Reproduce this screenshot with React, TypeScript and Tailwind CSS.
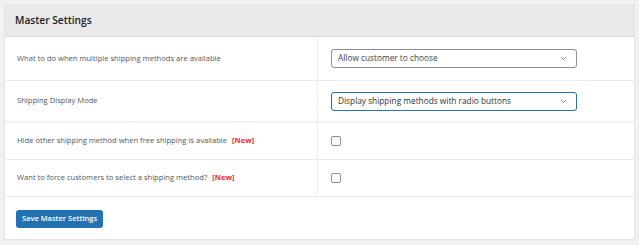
import { ChevronDown } from "lucide-react";

function SettingRow({ label, isNew, children, className }: { label: string, isNew?: boolean, children: React.ReactNode, className?: string }) {
    return (
        <div className={`flex border-b border-[#ececec] ${className ?? ""}`}>
            <div className="w-[313px] flex items-center pl-[12px] border-r border-[#f1f1f1] text-[7.6px] text-[#50575e]">
                <span>{label}</span>
                {isNew && <span className="ml-[5px] font-bold text-[#ff2727]">[New]</span>}
            </div>
            <div className="flex-1 flex items-center pl-[13px]">
                {children}
            </div>
        </div>
    )
}

function Select({ value, focused }: { value: string, focused?: boolean }) {
    return (
        <div className={`w-[246px] h-[19px] flex items-center justify-between pl-[6px] pr-[8px] rounded-[3px] bg-white text-[8.3px] ${focused ? "border border-[#2271b1] text-[#2c3338]" : "border border-[#8c8f94] text-[#3c434a]"}`}>
            <span>{value}</span>
            <ChevronDown className="w-[9px] h-[9px] text-[#50575e]" strokeWidth={2} />
        </div>
    )
}

function Checkbox() {
    return <div className="w-[10px] h-[10px] rounded-[2px] border border-[#8c8f94] bg-white" />
}

export default function App() {
    return (
        <div className="w-[639px] h-[245px] bg-[#f1f1f1] pt-[4px] pl-[4px]" style={{ fontFamily: '"Open Sans", "Noto Sans", sans-serif' }}>
            <div className="w-[631px] h-[236px] bg-white border border-[#e5e5e5] flex flex-col">
                <div className="h-[32px] bg-[#e9e9e9] border-b border-[#dcdcdc] flex items-center pl-[10px]">
                    <h2 className="text-[10.2px] font-semibold text-[#1d2327]">Master Settings</h2>
                </div>
                <SettingRow label="What to do when multiple shipping methods are available" className="h-[44px]">
                    <Select value="Allow customer to choose" />
                </SettingRow>
                <SettingRow label="Shipping Display Mode" className="h-[42px] border-b-[2px] border-b-[#f1f1f1]">
                    <Select value="Display shipping methods with radio buttons" focused />
                </SettingRow>
                <SettingRow label="Hide other shipping method when free shipping is available" isNew className="h-[37px]">
                    <Checkbox />
                </SettingRow>
                <SettingRow label="Want to force customers to select a shipping method?" isNew className="h-[37px]">
                    <Checkbox />
                </SettingRow>
                <div className="flex-1 flex items-center pl-[11px] pt-[2px]">
                    <button className="h-[18px] w-[87px] rounded-[3px] bg-[#2271b1] text-white text-[7.5px] font-semibold">Save Master Settings</button>
                </div>
            </div>
        </div>
    )
}
